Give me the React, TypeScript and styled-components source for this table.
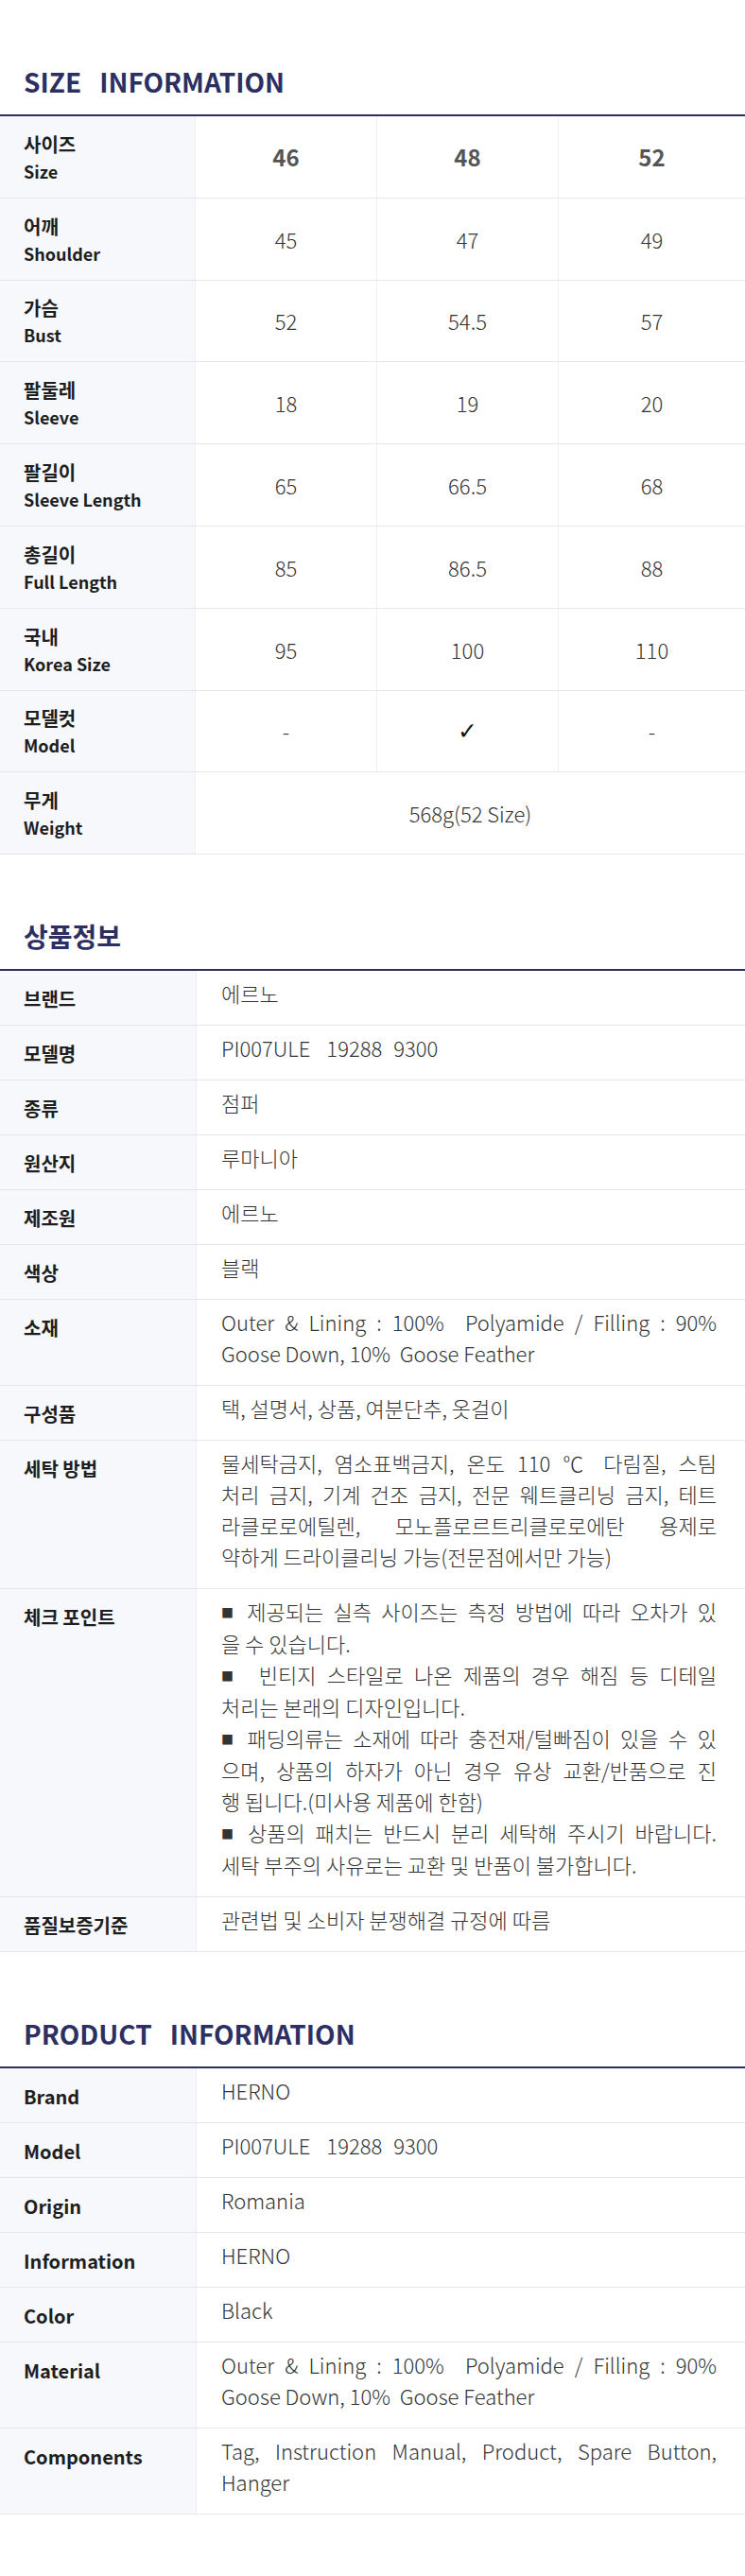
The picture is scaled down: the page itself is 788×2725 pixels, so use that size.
import React from "react";
import styled, { createGlobalStyle } from "styled-components";

const GlobalStyle = createGlobalStyle`
  html, body {
    margin: 0;
    padding: 0;
    background: #ffffff;
  }
  body {
    font-family: "Noto Sans CJK KR", "Noto Sans", sans-serif;
    color: #222222;
    -webkit-font-smoothing: antialiased;
  }
  * { box-sizing: border-box; }
`;

const NAVY = "#2d2f63";
const LABEL_BG = "#f7f8fc";
const ROW_LINE = "#e6e6e8";
const COL_LINE = "#efeff2";

const Page = styled.div`
  width: 788px;
  padding-bottom: 67px;
`;

const Section = styled.section`
  padding-top: 66px;
`;

const Title = styled.h2`
  margin: 0 0 15px;
  padding-left: 25px;
  font-size: 28px;
  line-height: 40px;
  font-weight: 700;
  color: ${NAVY};
  white-space: pre;
`;

const Table = styled.div`
  border-top: 2px solid ${NAVY};
`;

/* ---------- Size table ---------- */

const SizeRow = styled.div`
  display: grid;
  grid-template-columns: 207px 192px 192px 1fr;
  height: 86.8px;
  border-bottom: 1px solid ${ROW_LINE};
`;

const SizeLabel = styled.div`
  background: ${LABEL_BG};
  border-right: 1px solid ${COL_LINE};
  display: flex;
  flex-direction: column;
  justify-content: center;
  padding-left: 25px;
  padding-top: 2px;
`;

const LabelKo = styled.span`
  font-size: 20px;
  line-height: 29px;
  font-weight: 700;
  color: #1e1e1e;
`;

const LabelEn = styled.span`
  font-size: 18px;
  line-height: 29px;
  font-weight: 700;
  color: #1e1e1e;
`;

const SizeCell = styled.div<{ $head?: boolean; $span?: number; $last?: boolean }>`
  display: flex;
  align-items: center;
  justify-content: center;
  grid-column: span ${(p) => p.$span ?? 1};
  border-right: ${(p) => (p.$last ? "none" : `1px solid ${COL_LINE}`)};
  font-size: ${(p) => (p.$head ? "24px" : "22px")};
  font-weight: ${(p) => (p.$head ? 700 : 300)};
  color: ${(p) => (p.$head ? "#555555" : "#333333")};
`;

const Check = styled.span`
  font-family: "DejaVu Sans", sans-serif;
  font-size: 25px;
  font-weight: 700;
  color: #111111;
  line-height: 1;
`;

/* ---------- Info tables ---------- */

const InfoRow = styled.div`
  display: grid;
  grid-template-columns: 208px 1fr;
  border-bottom: 1px solid ${ROW_LINE};
`;

const InfoLabel = styled.div`
  background: ${LABEL_BG};
  border-right: 1px solid ${COL_LINE};
  padding: 13px 10px 0 25px;
  font-size: 20px;
  line-height: 33px;
  font-weight: 700;
  color: #1e1e1e;
`;

const InfoValue = styled.div`
  padding: 7px 30px 17px 26px;
  font-size: 22px;
  line-height: 33px;
  font-weight: 300;
  color: #333333;
  white-space: pre-wrap;
`;

const Line = styled.div<{ $justify?: boolean }>`
  text-align: ${(p) => (p.$justify ? "justify" : "left")};
  text-align-last: ${(p) => (p.$justify ? "justify" : "left")};
  white-space: pre;
`;

const Bullet = styled.span`
  display: inline-block;
  font-size: 13px;
  vertical-align: 3px;
  margin-right: 4px;
`;

const Seg = styled.span<{ $gap?: number }>`
  display: inline-block;
  margin-right: ${(p) => p.$gap ?? 0}px;
`;

type LineDef = { text: string; justify?: boolean; bullet?: boolean };
type Val = React.ReactNode | LineDef[];

const sizeRows: { ko: string; en: string; vals: React.ReactNode[]; head?: boolean }[] = [
  { ko: "사이즈", en: "Size", vals: ["46", "48", "52"], head: true },
  { ko: "어깨", en: "Shoulder", vals: ["45", "47", "49"] },
  { ko: "가슴", en: "Bust", vals: ["52", "54.5", "57"] },
  { ko: "팔둘레", en: "Sleeve", vals: ["18", "19", "20"] },
  { ko: "팔길이", en: "Sleeve Length", vals: ["65", "66.5", "68"] },
  { ko: "총길이", en: "Full Length", vals: ["85", "86.5", "88"] },
  { ko: "국내", en: "Korea Size", vals: ["95", "100", "110"] },
  { ko: "모델컷", en: "Model", vals: ["-", <Check key="c">✓</Check>, "-"] },
];

const material: LineDef[] = [
  { text: "Outer & Lining : 100%  Polyamide / Filling : 90%", justify: true },
  { text: "Goose Down, 10%  Goose Feather" },
];

const modelNo = (
  <>
    <Seg $gap={17}>PI007ULE</Seg>
    <Seg $gap={12}>19288</Seg>
    <Seg>9300</Seg>
  </>
);

const koInfo: { label: string; value: Val }[] = [
  { label: "브랜드", value: "에르노" },
  { label: "모델명", value: modelNo },
  { label: "종류", value: "점퍼" },
  { label: "원산지", value: "루마니아" },
  { label: "제조원", value: "에르노" },
  { label: "색상", value: "블랙" },
  { label: "소재", value: material },
  { label: "구성품", value: "택, 설명서, 상품, 여분단추, 옷걸이" },
  {
    label: "세탁 방법",
    value: [
      { text: "물세탁금지, 염소표백금지, 온도 110 ℃ 다림질, 스팀", justify: true },
      { text: "처리 금지, 기계 건조 금지, 전문 웨트클리닝 금지, 테트", justify: true },
      { text: "라클로로에틸렌,  모노플로르트리클로로에탄  용제로", justify: true },
      { text: "약하게 드라이클리닝 가능(전문점에서만 가능)" },
    ],
  },
  {
    label: "체크 포인트",
    value: [
      { text: " 제공되는 실측 사이즈는 측정 방법에 따라 오차가 있", justify: true, bullet: true },
      { text: "을 수 있습니다." },
      { text: "  빈티지 스타일로 나온 제품의 경우 해짐 등 디테일", justify: true, bullet: true },
      { text: "처리는 본래의 디자인입니다." },
      { text: " 패딩의류는 소재에 따라 충전재/털빠짐이 있을 수 있", justify: true, bullet: true },
      { text: "으며, 상품의 하자가 아닌 경우 유상 교환/반품으로 진", justify: true },
      { text: "행 됩니다.(미사용 제품에 한함)" },
      { text: " 상품의 패치는 반드시 분리 세탁해 주시기 바랍니다.", justify: true, bullet: true },
      { text: "세탁 부주의 사유로는 교환 및 반품이 불가합니다." },
    ],
  },
  { label: "품질보증기준", value: "관련법 및 소비자 분쟁해결 규정에 따름" },
];

const enInfo: { label: string; value: Val }[] = [
  { label: "Brand", value: "HERNO" },
  { label: "Model", value: modelNo },
  { label: "Origin", value: "Romania" },
  { label: "Information", value: "HERNO" },
  { label: "Color", value: "Black" },
  { label: "Material", value: material },
  {
    label: "Components",
    value: [
      { text: "Tag, Instruction Manual, Product, Spare Button,", justify: true },
      { text: "Hanger" },
    ],
  },
];

function InfoTable({ rows }: { rows: { label: string; value: Val }[] }) {
  return (
    <Table>
      {rows.map((r) => (
        <InfoRow key={r.label}>
          <InfoLabel>{r.label}</InfoLabel>
          <InfoValue>
            {Array.isArray(r.value)
              ? (r.value as LineDef[]).map((l, i) => (
                  <Line key={i} $justify={l.justify}>
                    {l.bullet && <Bullet>■</Bullet>}
                    {l.text}
                  </Line>
                ))
              : r.value}
          </InfoValue>
        </InfoRow>
      ))}
    </Table>
  );
}

export default function App() {
  return (
    <Page>
      <GlobalStyle />
      <Section>
        <Title>{"SIZE   INFORMATION"}</Title>
        <Table>
          {sizeRows.map((r) => (
            <SizeRow key={r.ko}>
              <SizeLabel>
                <LabelKo>{r.ko}</LabelKo>
                <LabelEn>{r.en}</LabelEn>
              </SizeLabel>
              {r.vals.map((v, i) => (
                <SizeCell key={i} $head={r.head} $last={i === 2}>
                  {v}
                </SizeCell>
              ))}
            </SizeRow>
          ))}
          <SizeRow>
            <SizeLabel>
              <LabelKo>무게</LabelKo>
              <LabelEn>Weight</LabelEn>
            </SizeLabel>
            <SizeCell $span={3} $last>
              568g(52 Size)
            </SizeCell>
          </SizeRow>
        </Table>
      </Section>

      <Section>
        <Title>상품정보</Title>
        <InfoTable rows={koInfo} />
      </Section>

      <Section>
        <Title>{"PRODUCT   INFORMATION"}</Title>
        <InfoTable rows={enInfo} />
      </Section>
    </Page>
  );
}
